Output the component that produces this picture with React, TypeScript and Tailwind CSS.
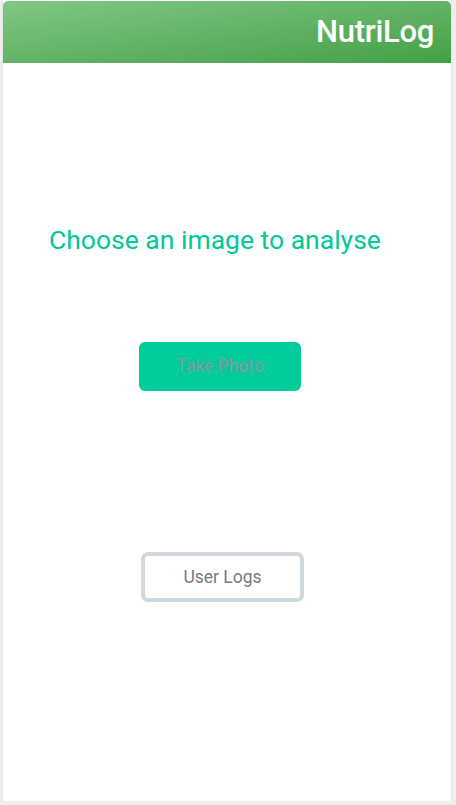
import React from "react";

export default function App() {
  return (
    <div className="w-[456px] h-[805px] bg-[#eeeeee] flex flex-col" style={{ fontFamily: "Roboto, 'Liberation Sans', sans-serif" }}>
      <div className="ml-[2px] mr-[4px] h-[801px] bg-white flex flex-col border-l border-r border-[#e4e4e4]">
        <div className="h-[62px] mt-[1px] rounded-t-[5px] bg-gradient-to-br from-[#81c784] to-[#43a047] flex items-center justify-end pr-[17px]">
          <span className="text-white text-[31px] font-medium tracking-[-0.3px]">NutriLog</span>
        </div>
        <div className="flex flex-col items-center">
          <div className="mt-[162px] w-full pl-[46px] text-[#00c896] text-[26.5px] leading-[30px]">Choose an image to analyse</div>
          <button className="mt-[87px] ml-[-14px] w-[162px] h-[49px] rounded-[6px] bg-[#00cc99] text-[#8c94a3] text-[17.5px]">Take Photo</button>
          <button className="mt-[161px] ml-[-9px] w-[163px] h-[50px] rounded-[7px] border-[4px] border-[#cfd8dc] bg-white text-[#717b85] text-[17.5px]">User Logs</button>
        </div>
      </div>
    </div>
  );
}
